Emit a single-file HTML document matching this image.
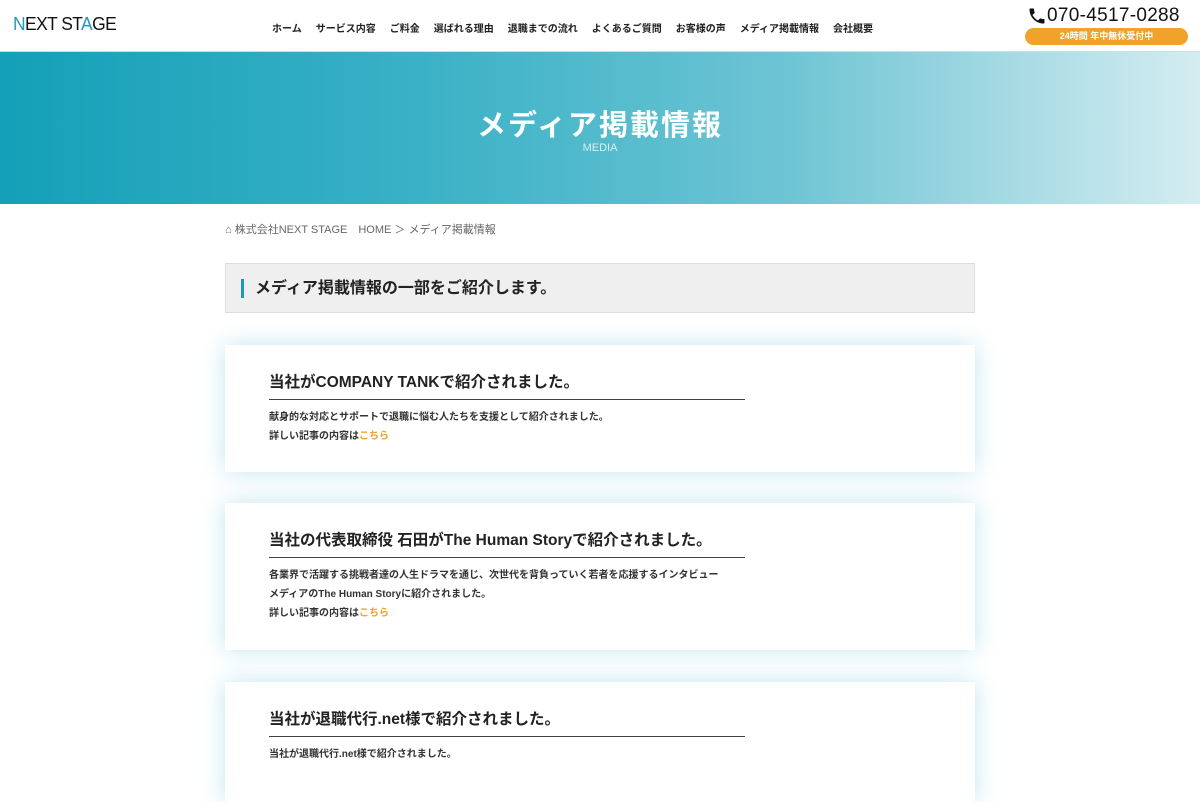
<!DOCTYPE html>
<html><head><meta charset="utf-8"><style>
*{margin:0;padding:0;box-sizing:border-box}
body{width:1200px;height:768px;overflow:hidden;background:#fff;font-family:"Liberation Sans","Noto Sans CJK JP",sans-serif;color:#222;position:relative}
.hdr{position:absolute;top:0;left:0;width:1200px;height:52px;background:#fff;border-bottom:1px solid #bfe3ea}
.logo{position:absolute;left:13px;top:14px;font-size:18px;letter-spacing:-0.6px;color:#111;transform:scaleX(0.97);transform-origin:left}
.logo b{font-weight:normal;color:#1d9bb5}
.nav{position:absolute;left:272px;top:20px;font-size:10px;font-weight:bold;color:#222;white-space:nowrap}
.nav span{margin-right:14px}
.tel{position:absolute;left:1027px;top:5px;font-size:19px;color:#111;display:flex;align-items:center;letter-spacing:0.3px}
.badge{position:absolute;left:1025px;top:28px;width:163px;height:17px;border-radius:9px;background:#f0a22a;color:#fff;font-size:9px;font-weight:bold;text-align:center;line-height:17px}
.ban{position:absolute;top:52px;left:0;width:1200px;height:152px;background:linear-gradient(90deg,#14a0b8 0%,#3ab1c6 35%,#6cc4d3 65%,#a8dbe4 85%,#d4edf1 100%)}
.ban h1{position:absolute;top:50px;width:100%;text-align:center;color:#fff;font-size:29px;font-weight:bold;letter-spacing:2px}
.ban p{position:absolute;top:90px;width:100%;text-align:center;color:#d8f0f4;font-size:11px}
.bc{position:absolute;left:225px;top:221px;font-size:11px;color:#666}
.intro{position:absolute;left:225px;top:263px;width:750px;height:50px;background:#efefef;border:1px solid #ddd}
.intro div{position:absolute;left:15px;top:15px;height:19px;border-left:3px solid #1d9bb5;padding-left:11px;font-size:16px;font-weight:bold;line-height:19px}
.card{position:absolute;left:225px;width:750px;background:#fff;box-shadow:0 0 22px rgba(120,200,225,.45)}
.card h2{position:absolute;left:44px;width:476px;top:28px;font-size:15.5px;font-weight:bold;padding-bottom:6px;border-bottom:1px solid #444;line-height:20px}
.card .t{position:absolute;left:44px;font-size:10px;font-weight:bold;line-height:19px;color:#333}
.o{color:#f0a22a}
</style></head><body>
<div class="hdr">
<div class="logo"><b>N</b>EXT ST<b>A</b>GE</div>
<div class="nav"><span>ホーム</span><span>サービス内容</span><span>ご料金</span><span>選ばれる理由</span><span>退職までの流れ</span><span>よくあるご質問</span><span>お客様の声</span><span>メディア掲載情報</span><span>会社概要</span></div>
<div class="tel"><svg width="20" height="20" viewBox="0 0 24 24"><path d="M6.6 10.8c1.4 2.8 3.8 5.1 6.6 6.6l2.2-2.2c.3-.3.7-.4 1-.2 1.1.4 2.3.6 3.6.6.6 0 1 .4 1 1V20c0 .6-.4 1-1 1C10.6 21 3 13.4 3 4c0-.6.4-1 1-1h3.5c.6 0 1 .4 1 1 0 1.3.2 2.5.6 3.6.1.3 0 .7-.2 1z" fill="#111"/></svg>070-4517-0288</div>
<div class="badge">24時間 年中無休受付中</div>
</div>
<div class="ban"><h1>メディア掲載情報</h1><p>MEDIA</p></div>
<div class="bc">⌂ 株式会社NEXT STAGE　HOME ＞ メディア掲載情報</div>
<div class="intro"><div>メディア掲載情報の一部をご紹介します。</div></div>
<div class="card" style="top:345px;height:127px"><h2>当社がCOMPANY TANKで紹介されました。</h2><div class="t" style="top:63px">献身的な対応とサポートで退職に悩む人たちを支援として紹介されました。<br>詳しい記事の内容は<span class="o">こちら</span></div></div>
<div class="card" style="top:503px;height:147px"><h2>当社の代表取締役 石田がThe Human Storyで紹介されました。</h2><div class="t" style="top:63px">各業界で活躍する挑戦者達の人生ドラマを通じ、次世代を背負っていく若者を応援するインタビュー<br>メディアのThe Human Storyに紹介されました。<br>詳しい記事の内容は<span class="o">こちら</span></div></div>
<div class="card" style="top:682px;height:120px"><h2>当社が退職代行.net様で紹介されました。</h2><div class="t" style="top:63px">当社が退職代行.net様で紹介されました。</div></div>
</body></html>
